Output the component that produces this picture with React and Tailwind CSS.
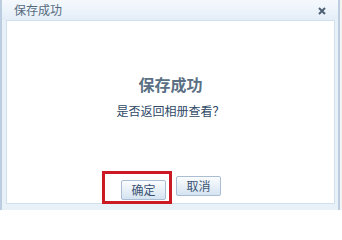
import React from "react";

const font = { fontFamily: '"Noto Sans CJK SC", "Noto Sans", sans-serif' };

export default function App() {
  return (
    <div
      className="w-[342px] h-[210px] flex bg-[#f3f3f3] overflow-hidden"
      style={font}
    >
      <div className="w-[340px] h-[210px] flex flex-col border-l-2 border-r-2 border-[#bccde0] bg-[#e8f0f8]">
        {/* title bar */}
        <div className="h-[20px] flex items-center justify-between pl-[12px] pr-[12px] bg-gradient-to-b from-[#f5f9fd] to-[#e4eef8] shrink-0">
          <span className="text-[12px] leading-[12px] text-[#566a7e]">保存成功</span>
          <svg width="8" height="8" viewBox="0 0 8 8" className="mt-[1px]">
            <path d="M1 1 L7 7 M7 1 L1 7" stroke="#4e6174" strokeWidth="2" />
          </svg>
        </div>
        {/* body */}
        <div className="flex-1 ml-[4px] mr-[3px] border border-[#d2e0ee] bg-white flex flex-col items-center">
          <div className="mt-[55px] text-[16px] leading-[16px] font-bold text-[#5a6f84]">
            保存成功
          </div>
          <div className="mt-[12px] text-[12px] leading-[14px] text-[#2f4966]">
            是否返回相册查看？
          </div>
          <div className="mt-auto mb-[3px] flex gap-[10px] pl-[1px]">
            <div className="relative">
              <button className="w-[45px] h-[20px] border border-[#aabdd3] rounded-[2px] bg-gradient-to-b from-[#fbfdfe] to-[#d5e3f1] text-[12px] leading-[18px] text-[#3b5372]">
                确定
              </button>
              <div className="absolute left-[-19px] top-[-5px] right-[-6px] bottom-[-4px] border-[3px] border-[#cc1a24] pointer-events-none" />
            </div>
            <button className="w-[45px] h-[20px] border border-[#aabdd3] rounded-[2px] bg-gradient-to-b from-[#fbfdfe] to-[#d5e3f1] text-[12px] leading-[18px] text-[#3b5372]">
              取消
            </button>
          </div>
        </div>
        <div className="h-[6px] shrink-0" />
      </div>
    </div>
  );
}
